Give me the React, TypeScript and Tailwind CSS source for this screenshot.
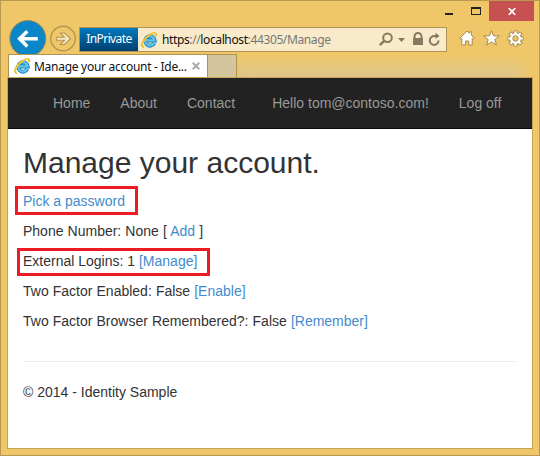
import type { ReactNode } from "react";

const uiFont = "font-['Noto_Sans',sans-serif]";

function IeLogo() {
  return (
    <svg width="17" height="18" viewBox="0 0 17 18" fill="none" className="block shrink-0">
      <path d="M13.3 12A4.7 4.7 0 1 1 13.7 9.4H5.4" stroke="#2186bd" strokeWidth="4" />
      <path d="M13 12A4.7 4.7 0 1 1 13.5 9.3H5.4" stroke="#62c3ec" strokeWidth="2.2" />
      <path d="M3 15.7C-1 16 1.6 9.2 7 5C11.4 1.6 16.2.8 15 5.2" stroke="#e8b01c" strokeWidth="1.9" />
      <path d="M3 15.5C-.4 15.6 2 9.1 7.3 5C11.7 1.7 15.8 1.2 14.8 4.8" stroke="#ffd93f" strokeWidth="1" />
    </svg>
  );
}

function WindowButtons() {
  return (
    <div className="flex h-[26px] justify-end pr-[5px]">
      <svg width="72" height="20" className="block" shapeRendering="crispEdges">
        <rect x="28" y="12" width="8" height="2" fill="#222" />
        <path d="M54 6h10v8H54zM55 8v5h8V8z" fill="#222" fillRule="evenodd" />
      </svg>
      <div className="flex h-5 w-[45px] items-center justify-center bg-[#c75050]">
        <svg width="8" height="7" viewBox="0 0 8 7">
          <path d="M.7 0L7.3 7M7.3 0L.7 7" stroke="#fff" strokeWidth="1.7" />
        </svg>
      </div>
    </div>
  );
}

function Toolbar() {
  return (
    <div className="flex h-[27px]">
      <svg width="70" height="37" viewBox="0 0 70 37" className="-mt-[7px] ml-2 block shrink-0">
        <circle cx="18.8" cy="18.5" r="18" fill="#0b87c8" stroke="#a58a48" strokeWidth="1" />
        <path d="M28.8 18.8H10.5M18.3 11.2l-7.6 7.6 7.6 7.6" fill="none" stroke="#fff" strokeWidth="3.5" />
        <circle cx="54" cy="18.6" r="12.3" fill="none" stroke="#b19651" strokeWidth="1.4" />
        <path d="M47.5 17.3h8l-4-4.3h4.2l5.8 5.7-5.8 5.8h-4.2l4-4.3h-8z" fill="#f8e8c4" stroke="#b19651" strokeWidth="1.1" />
      </svg>
      <div className="flex h-[25px] w-[368px] items-center border border-[#b09352] bg-[#f9eaca]">
        <div className={`${uiFont} flex h-full w-[58px] items-center justify-center bg-linear-to-b from-[#007bc0] to-[#003f70] text-xs text-white`}>
          <span className="-mt-px tracking-[-0.6px]">InPrivate</span>
        </div>
        <div className="ml-[3px]"><IeLogo /></div>
        <div className={`${uiFont} mt-px ml-[4px] w-[173px] whitespace-nowrap text-xs tracking-[-0.38px] text-[#777]`}>
          <span className="text-[#111]">https</span>://<span className="text-[#111]">localhost</span>:44305/Manage
        </div>
        <svg width="112" height="23" viewBox="0 0 112 23" className="-mr-0.5 block shrink-0" fill="none" stroke="#847a60">
          <circle cx="52.5" cy="9.8" r="4.3" strokeWidth="2" />
          <path d="M49.2 12.8l-4.4 4.4" strokeWidth="2.4" />
          <path d="M63 10h7l-3.5 4z" fill="#847a60" stroke="none" />
          <path d="M79.5 11V8.5a3.5 3.5 0 0 1 7 0V11" strokeWidth="2" />
          <rect x="78" y="10" width="10" height="7" rx=".5" fill="#847a60" stroke="none" />
          <path d="M103.5 12.5a4.4 4.4 0 1 1-4-4.4h2" strokeWidth="2" />
          <path d="M100.5 4.8v6.2l4-3.1z" fill="#847a60" stroke="none" />
        </svg>
      </div>
      <div className="ml-3 flex h-[22px] items-center gap-[7.5px]">
        <svg width="16" height="16" viewBox="0 0 16 16" fill="#fff" stroke="#a58a4d" strokeWidth="1">
          <path d="M.7 8.4L8 1l2.3 2.2V1.8h2v3.4l3.1 3.2-1.2 1-1-.9v6.5H9.8V11H6.5v4H2.8V8.5l-1 .9z" />
        </svg>
        <svg width="17" height="16" viewBox="0 0 17 16" fill="#fff" stroke="#a58a4d" strokeWidth="1">
          <path d="M8.5.8l2 5h5.8l-4.5 3.7 1.6 5.6-4.9-3.2-4.9 3.2 1.6-5.6L.7 5.8h5.8z" />
        </svg>
        <svg width="17" height="17" viewBox="0 0 17 17">
          <g stroke="#a58a4d" strokeWidth="4" fill="none">
            <path d="M8.5.5v16M.5 8.5h16M2.7 2.7l11.6 11.6M14.3 2.7L2.7 14.3" />
          </g>
          <circle cx="8.5" cy="8.5" r="6.5" fill="#a58a4d" />
          <path d="M8.5 1.2v14.6M1.2 8.5h14.6M3.3 3.3l10.4 10.4M13.7 3.3L3.3 13.7" stroke="#fff" strokeWidth="2.2" />
          <circle cx="8.5" cy="8.5" r="5.4" fill="#fff" />
          <circle cx="8.5" cy="8.5" r="2.7" fill="#efc76a" stroke="#a58a4d" />
        </svg>
      </div>
    </div>
  );
}

function TabBar() {
  return (
    <div className="relative flex h-[23px] pl-[7px]">
      <div className="flex w-[200px] items-center border border-b-0 border-[#b09352] bg-white">
        <div className="ml-[5px]"><IeLogo /></div>
        <span className={`${uiFont} mt-0.5 ml-[3px] w-[157px] whitespace-nowrap text-xs tracking-[-0.28px] text-[#111]`}>
          Manage your account - Ide...
        </span>
        <svg width="8" height="8" viewBox="0 0 8 8" className="ml-px">
          <path d="M.7.7l6.6 6.6M7.3.7L.7 7.3" stroke="#aaa" strokeWidth="2" />
        </svg>
      </div>
      <div className="w-[29px] border-t border-r border-[#b09352] bg-[#d5c59c]" />
      <div className="mr-[6px] flex-1 bg-linear-to-b from-[#efc768] to-[#dfc688] mask-r-from-94% mask-r-to-100%" />
    </div>
  );
}

function NavItem({ children }: { children: ReactNode }) {
  return <a className="text-[#999]">{children}</a>;
}

function Action({ children }: { children: ReactNode }) {
  return <a className="text-[#428bca]">{children}</a>;
}

export default function App() {
  return (
    <div className="flex h-[456px] w-[540px] flex-col overflow-hidden border border-[#b7994f] bg-[#efc768]">
      <WindowButtons />
      <Toolbar />
      <TabBar />
      <div className="mx-[6px] h-[372px] border border-[#c6a554] bg-white font-['Liberation_Sans',Arial,sans-serif] text-sm leading-5 text-[#333]">
        <nav className="flex h-[51px] items-center border-b border-[#080808] bg-[#222] pl-[45px] whitespace-nowrap">
          <div className="flex gap-[30px]">
            <NavItem>Home</NavItem>
            <NavItem>About</NavItem>
            <NavItem>Contact</NavItem>
          </div>
          <div className="ml-[37px] flex gap-[30px]">
            <NavItem>Hello tom@contoso.com!</NavItem>
            <NavItem>Log off</NavItem>
          </div>
        </nav>
        <main className="px-[15px] pt-[17px]">
          <h2 className="mb-[11px] text-[30px] leading-[34px]">Manage your account.</h2>
          <div className="-mt-[5px] -ml-[8px] h-[29px] w-[123px] border-3 border-[#ed1c24] pt-[2px] pl-[5px]">
            <Action>Pick a password</Action>
          </div>
          <p className="mt-[6px] [word-spacing:0.2px]">Phone Number: None [ <Action>Add</Action> ]</p>
          <div className="mt-[7px] -ml-[6px] h-[28px] w-[193px] border-3 border-[#ed1c24] pl-[3px]">
            External Logins: 1 <Action>[Manage]</Action>
          </div>
          <p className="mt-[5px] [word-spacing:0.2px]">Two Factor Enabled: False <Action>[Enable]</Action></p>
          <p className="mt-[10px] [word-spacing:0.2px]">Two Factor Browser Remembered?: False <Action>[Remember]</Action></p>
          <hr className="mt-[30px] border-[#eee]" />
          <footer className="mt-5">© 2014 - Identity Sample</footer>
        </main>
      </div>
    </div>
  );
}
